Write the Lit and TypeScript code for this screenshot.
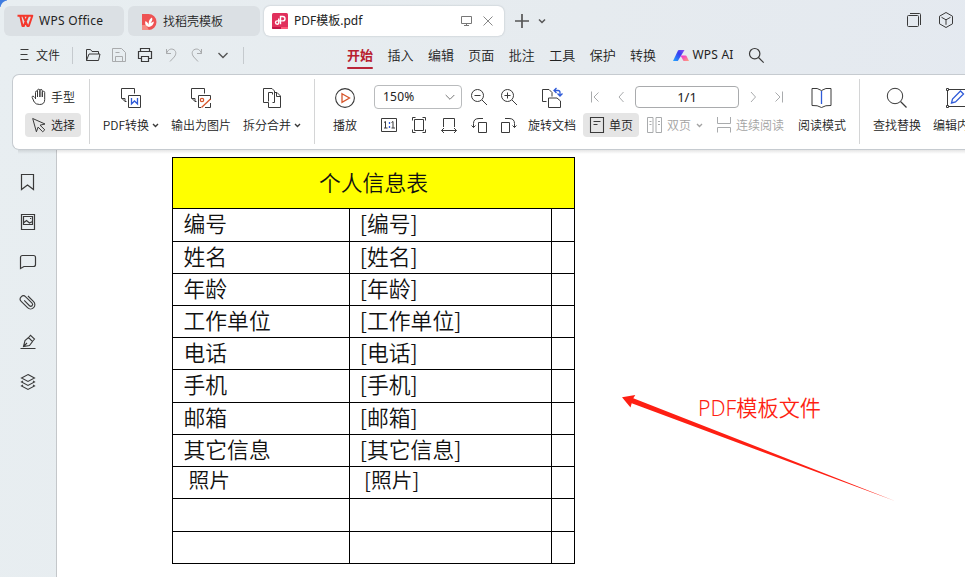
import { LitElement, html, css, svg, nothing } from "lit";
import type { SVGTemplateResult } from "lit";
import { customElement } from "lit/decorators.js";
import { classMap } from "lit/directives/class-map.js";

/* Icons share one drawing grid; each viewBox selects the part that belongs to the icon. */
const icon = (x: number, y: number, w: number, h: number, body: SVGTemplateResult, cls = "") =>
  html`<svg class="ic ${cls}" width=${w} height=${h} viewBox="${x} ${y} ${w} ${h}" aria-hidden="true">${body}</svg>`;

const smallChevron = html`<svg class="ic chev" width="7" height="5" viewBox="0 0 7 5"><path d="M1 1L3.5 3.5L6 1" stroke-width="1.4" /></svg>`;

const MENU = ["开始", "插入", "编辑", "页面", "批注", "工具", "保护", "转换"];
const FIELDS = ["编号", "姓名", "年龄", "工作单位", "电话", "手机", "邮箱", "其它信息", "照片"];

@customElement("app-root")
export class AppRoot extends LitElement {
  static styles = css`
    :host {
      display: block; position: relative; width: 965px; height: 577px; overflow: hidden;
      background: linear-gradient(100deg, #e8eef1 0%, #e6ebef 55%, #e4e9f0 100%);
      font: 12px/16px "Noto Sans", "Noto Sans CJK SC", sans-serif; color: #222;
    }
    * { box-sizing: border-box; }
    .ic { display: block; flex: none; fill: none; stroke: #3a3a3a; stroke-width: 1; overflow: visible; }
    .grey { stroke: #a9abad; }
    .label { white-space: nowrap; font-family: "Noto Sans CJK SC", sans-serif; font-weight: 350; }
    .latin { white-space: nowrap; }
    .t1 { letter-spacing: .3px; }
    .t2 { letter-spacing: .2px; }
    .corner { position: absolute; left: 0; top: 0; width: 7px; height: 7px;
      background: radial-gradient(circle at 8px 8px, transparent 7px, #3f7ce0 8px); }

    .tabs { display: flex; height: 41px; padding: 6px 0 5px 4px; gap: 4px; align-items: stretch; }
    .tab { display: flex; align-items: center; border-radius: 6px; background: #dbe0e4; }
    .home { width: 120px; padding-left: 13px; gap: 6px; }
    .store { width: 132px; padding-left: 13px; gap: 7px; }
    .doc { width: 240px; padding-left: 8px; gap: 6px; background: #fff; box-shadow: 0 0 2px #aeb5bc; }
    .tools { display: flex; margin-left: auto; gap: 11px; padding-right: 10px; }
    .add { display: flex; align-items: center; gap: 9px; margin-left: 7px; }
    .win { display: flex; align-items: center; gap: 17px; margin-left: auto; padding-right: 11px; }
    .win .ic { position: relative; top: -1px; }

    .menubar { display: flex; height: 33px; padding: 0 0 5px 20px; align-items: center; }
    .file { margin-left: 7px; width: 26px; }
    .vline { width: 1px; height: 17px; background: #c5cace; flex: none; }
    .vline.a { margin: 0 12px 0 10px; }
    .vline.b { margin-left: 14px; }
    .quick { display: flex; gap: 10px; align-items: center; }
    .menu { display: flex; margin-left: 103px; height: 28px; }
    .menu .entry { position: relative; width: 40.45px; font-size: 13px; line-height: 27px; }
    .menu .entry.on { color: #b8202f; font-weight: 700; }
    .menu .entry.on::after { content: ""; position: absolute; left: 0; top: 26px; width: 26px; height: 2px; background: #b92538; border-radius: 1px; }
    .ai { display: flex; gap: 4px; margin-left: 2px; width: 76px; align-items: center; }

    .ribbon { position: relative; z-index: 1; display: flex; height: 76px; margin-left: 12px; padding-left: 1px; border: 1px solid #c6cbd0; border-right: 0;
      border-radius: 7px 0 0 7px; background: #fff; overflow: hidden; }
    .shade { position: absolute; z-index: 1; left: 18px; right: 0; top: 150px; height: 4px; background: linear-gradient(rgba(0,0,0,.1), transparent); }
    .rule { width: 1px; height: 65px; margin-top: 4px; background: #d4d5d6; flex: none; }
    .group { display: flex; flex: none; }
    .g1 { width: 75px; flex-direction: column; padding: 10px 0 0 11px; gap: 4px; }
    .g2 { width: 224px; padding-left: 8px; }
    .g3 { width: 544px; padding-left: 6px; }
    .g4 { padding-left: 7px; }
    .pill { display: flex; align-items: center; width: 56px; height: 24px; gap: 5px; padding-left: 7px; border-radius: 4px; flex: none; }
    .pill.on { background: #e5e5e5; }
    .big { display: flex; flex-direction: column; align-items: center; flex: none; padding-top: 13px; gap: 9px; }
    .big .label { display: flex; align-items: center; gap: 3px; }
    .w48 { width: 48px; } .w56 { width: 56px; } .w60 { width: 60px; }
    .w66 { width: 66px; } .w68 { width: 68px; } .w74 { width: 74px; }
    .zoom { margin-left: 5px; width: 150px; padding-top: 10px; }
    .line { display: flex; align-items: center; height: 24px; }
    .select { display: flex; align-items: center; justify-content: space-between; width: 88px; height: 24px; padding: 0 6px 0 8px;
      border: 1px solid #b9bbbd; border-radius: 4px; margin-right: 9px; }
    .out { margin-right: 14px; }
    .fits { gap: 14px; padding-left: 7px; margin-top: 4px; }
    .nav { margin-left: 3px; width: 211px; padding-top: 10px; }
    .pager { padding-left: 8px; }
    .page { width: 104px; height: 22px; margin: 0 12px 0 11px; border: 1px solid #a9abad; border-radius: 4px; text-align: center;
      font: 13px/20px "Noto Sans", sans-serif; color: #222; }
    .next { margin-right: 18px; } .prev { margin-left: 19px; }
    .modes { margin-top: 4px; }
    .mode { display: flex; align-items: center; color: #a3a3a3; gap: 5px; }
    .mode .chev { stroke: #a3a3a3; }
    .two { margin-left: 8px; } .cont { margin-left: 14px; }

    .body { display: flex; height: 427px; }
    .side { width: 57px; border-right: 1px solid #c4c7ca; padding: 24px 0 0 20px; display: flex; flex-direction: column; gap: 24px; }
    .canvas { flex: 1; background: #fff; padding: 7px 0 0 115px; }
    .sheet { display: grid; width: 403px; padding: 1px; gap: 1px; background: #000; color: #111;
      grid-template-columns: 176px 201px 22px;
      grid-template-rows: 50px 32px 31px 31px 31px 31px 32px 31px 31px 31px 32px 31px;
      font: 21.8px/28px "Noto Sans CJK SC", sans-serif; font-weight: 350; }
    .cell { background: #fff; padding-left: 10.5px; white-space: nowrap; }
    .cell.value { padding-left: 9.8px; }
    .cell.title { grid-column: 1 / -1; background: #ff0; text-align: center; padding: 0; line-height: 48px; }
    .cell.photo { font-size: 20.8px; line-height: 25px; padding-left: 15.5px; }
    .cell.photo.value { padding-left: 14px; }
    .note { position: absolute; left: 698px; top: 394px; font: 21.2px/28px "Noto Sans", "Noto Sans CJK SC", sans-serif; color: #fe1f13; white-space: nowrap; font-weight: 350; }
    .arrow { position: absolute; left: 620px; top: 393px; }
  `;

  private tabs() {
    return html`<div class="tabs">
      <div class="tab home">
        ${icon(17, 13, 16, 14, svg`<path d="M17.500 14.800H32.300L28.800 25H27.500L23.200 15M20.300 15L22.500 25H23.800L28 15" stroke="#f4382c" stroke-width="2" stroke-linejoin="round"/>`)}
        <span class="latin t1">WPS Office</span>
      </div>
      <div class="tab store">
        ${icon(141, 12, 15, 17, svg`<g stroke="none"><path d="M142 13h6.500a7.800 7.800 0 0 1 0 16H142z" fill="#ee5253"/><path d="M142 24h4l3 5H142z" fill="#f58b84"/><path d="M149 26C144.500 25 145 21.500 145.500 20C147.500 21 149 23 149 26C148 22 149 18 152 16.500C153 19 151.500 21 150.500 22L154 20.500C153.500 23.500 152 25.500 149 26z" fill="#fff"/></g>`)}
        <span class="label">找稻壳模板</span>
      </div>
      <div class="tab doc">
        ${icon(272, 13, 16, 16, svg`<rect x="272" y="13" width="16" height="16" rx="1.500" fill="#e1305c" stroke="none"/><path d="M272 27h9v2h-8q-1 0-1-1z" fill="#c01648" stroke="none"/><path d="M281 27h7v1q0 1-1 1h-6z" fill="#ff5878" stroke="none"/><path d="M280.500 24.200V16.500h2.300a2.200 2.200 0 0 1 0 4.400H277.200a1.700 1.700 0 0 0 0 3.400q1.500 0 1.500-1.500V18.500" stroke="#fff" stroke-width="1.400"/>`)}
        <span class="latin">PDF模板.pdf</span>
        <div class="tools">
          ${icon(461, 16, 11, 10, svg`<path d="M461.500 16.500h10v7h-10zM464 25.500h5M466.500 23.500v2" stroke="#777"/>`)}
          ${icon(483, 16, 11, 10, svg`<path d="M483.500 16.500l9 9M492.500 16.500l-9 9" stroke="#888"/>`)}
        </div>
      </div>
      <div class="add">
        ${icon(515, 14, 14, 14, svg`<path d="M522 14v14M515 21h14" stroke="#555" stroke-width="1.700"/>`)}
        ${icon(538, 18, 8, 6, svg`<path d="M539 19.500l3 3l3-3" stroke="#555" stroke-width="1.500"/>`)}
      </div>
      <div class="win">
        ${icon(907, 13, 15, 14, svg`<rect x="907.500" y="15.500" width="11" height="11" rx="1"/><path d="M910 13.500h9.500q1 0 1 1V25"/>`)}
        ${icon(939, 12, 15, 16, svg`<path d="M946 12.500l6.500 3.700v7.600l-6.500 3.700l-6.500-3.700v-7.600zM941.500 17.300l4.500 2.500l4.500-2.500M946 19.800v5"/>`)}
      </div>
    </div>`;
  }

  private menubar() {
    return html`<div class="menubar">
      ${icon(20, 49, 9, 12, svg`<path d="M20.500 49.500h8M20.500 54.500h7M20.500 59.500h8"/>`)}
      <span class="label file">文件</span>
      <div class="vline a"></div>
      <div class="quick">
        ${icon(85, 48, 16, 14, svg`<path d="M86.500 60.500v-11h4l1.500 2h6.500v2.500M86.500 60.500l2.500-6.500h11l-1.500 6.500z" stroke-linejoin="round"/>`)}
        ${icon(111, 48, 16, 14, svg`<path d="M112.500 48.500h9l4 4v9h-13zM115.500 61.500v-5h7v5M115.500 52.500h4"/>`, "grey")}
        ${icon(137, 48, 16, 14, svg`<path d="M140.500 51.500v-3h9v3M141 58.500h-2.500v-7h13v7H149M141.500 56.500h7v5h-7z" stroke-width="1.200"/>`)}
        ${icon(163, 48, 16, 14, svg`<path d="M166.500 49v4.500h4.500M166.500 53.500c1.500-4 4-5 6.500-4.200c3.500 1.200 3.500 5 1.200 7.700l-4.200 4.500"/>`, "grey")}
        ${icon(189, 48, 16, 14, svg`<path d="M201.500 49v4.500H197M201.500 53.500c-1.500-4-4-5-6.500-4.200c-3.500 1.200-3.500 5-1.200 7.700l4.200 4.500"/>`, "grey")}
        ${icon(215, 52, 14, 6, svg`<path d="M218.500 53l4.500 4.500l4.500-4.500" stroke="#555" stroke-width="1.400"/>`)}
      </div>
      <div class="vline b"></div>
      <div class="menu">${MENU.map((m, i) => html`<span class=${classMap({ label: true, entry: true, on: i === 0 })}>${m}</span>`)}</div>
      <div class="ai">
        ${icon(673, 49, 16, 11, svg`<defs><linearGradient id="a" x1="0" y1="1" x2="1" y2="0"><stop offset="0" stop-color="#20a8ff"/><stop offset=".6" stop-color="#3a3cf0"/><stop offset="1" stop-color="#8b4cf5"/></linearGradient><linearGradient id="b" x1="0" y1="0" x2="1" y2="1"><stop offset="0" stop-color="#f028d8"/><stop offset="1" stop-color="#ffa27a"/></linearGradient></defs><path d="M673 60L678 49.500q.3-.5 1-.5h5.500L677.800 60z" fill="url(#a)" stroke="none"/><path d="M680.500 54.500h5q.7 0 1 .5l2.500 5h-5.500z" fill="url(#b)" stroke="none"/>`)}
        <span class="latin t2">WPS AI</span>
      </div>
      ${icon(749, 48, 15, 15, svg`<circle cx="754.700" cy="53.700" r="5.200" stroke-width="1.200"/><path d="M758.500 57.500l5.200 5.200" stroke-width="1.200"/>`)}
    </div>`;
  }

  private big(cls: string, ic: unknown, text: string, drop = false) {
    return html`<div class="big ${cls}">${ic}<span class="label">${text}${drop ? smallChevron : nothing}</span></div>`;
  }

  private ribbon() {
    return html`<div class="ribbon">
      <div class="group g1">
        <div class="pill">${icon(32, 89, 14, 16, svg`<path d="M35.500 99V92.500q0-1.500 1-1.500t1 1.500V97V90.500q0-1.300 1.200-1.300t1.200 1.300V97V90.700q0-1.200 1.200-1.200t1.200 1.200V97V92.500q0-1.200 1.200-1.200t1.200 1.200v7q0 5-5 5q-4 0-5.500-2.500l-2-4.500q-.4-1.500 1-1.500l1.300 1.500"/>`)}<span class="label">手型</span></div>
        <div class="pill on">${icon(32, 118, 14, 14, svg`<path d="M32.700 118.500l12.300 5.500l-5 1.200l4.800 4.600l-2.100 2l-4.600-4.700l-1.700 4.700z" stroke-linejoin="round"/>`)}<span class="label">选择</span></div>
      </div>
      <div class="rule"></div>
      <div class="group g2">
        ${this.big("w66", icon(121, 88, 20, 20, svg`<path d="M126.500 101.500h-1.500l-3.500-3.500v-9.500h13v5M121.500 98.500h3.500v3M128.500 95.500h12v12h-12z"/><path d="M131.500 98v6l3-3l3 3V98" stroke="#2f5bd8" stroke-width="1.300"/>`), "PDF转换", true)}
        ${this.big("w74", icon(191, 88, 20, 20, svg`<path d="M196.500 101.500h-1.500l-3.500-3.500v-9.500h13v5M191.500 98.500h3.500v3M210.500 100v-4.500h-12v12H201M205 107.500h5.500v-4.500"/><path d="M201.500 107.500l9-8.500" stroke="#d6552a" stroke-width="1.300"/><circle cx="202" cy="100" r="1.700" stroke="#d6552a" stroke-width="1.200"/>`), "输出为图片")}
        ${this.big("w68", icon(263, 88, 18, 20, svg`<path d="M268.500 102.500h-5v-14h8.500l2.500 2.500v2.500M268.500 102.500v5h12V96l-3.500-3.500h-2.500v10h-2M276.500 92.500v4h4M268.500 101.500v-9h4v2"/>`), "拆分合并", true)}
      </div>
      <div class="rule"></div>
      <div class="group g3">
        ${this.big("w48", icon(335, 88, 20, 20, svg`<circle cx="345" cy="98" r="9.400" stroke-width="1.100"/><path d="M342 93.700l7.500 4.300l-7.500 4.300z" stroke="#d6552a" stroke-width="1.300"/>`), "播放")}
        <div class="zoom">
          <div class="line">
            <div class="select"><span class="latin t2">150%</span>${icon(445, 94, 10, 6, svg`<path d="M445.700 95l4.300 4.300l4.300-4.300" stroke="#777"/>`)}</div>
            ${icon(471, 89, 16, 16, svg`<circle cx="477.500" cy="95.500" r="6" /><path d="M474.500 95.500h6M482 100l5 5"/>`, "out")}
            ${icon(501, 89, 16, 16, svg`<circle cx="507.500" cy="95.500" r="6" /><path d="M504.500 95.500h6M507.500 92.500v6M512 100l5 5"/>`)}
          </div>
          <div class="line fits">
            ${icon(381, 117, 16, 16, svg`<path d="M381.500 118.500h15v13h-15z"/><path d="M384 122.500l1.500-1v6.500M384 128h3.500M391.500 122.500l1.500-1v6.500M391.500 128h3.500"/><path d="M389.500 122v2M389.500 126v2" stroke="#2f5bd8" stroke-width="1.300"/>`)}
            ${icon(411, 117, 16, 16, svg`<path d="M414.500 119.500h9v11h-9zM412.500 120.500v-3h3M422.500 117.500h3v3M425.500 129.500v3h-3M415.500 132.500h-3v-3"/>`)}
            ${icon(441, 117, 16, 16, svg`<path d="M443.500 127v-8.500h11v8.500M441.500 130.500h15M444 128l-2.500 2.500l2.500 2.500M454 128l2.500 2.500l-2.500 2.500"/>`)}
            ${icon(471, 117, 16, 16, svg`<path d="M478.500 122.500h8v10h-8zM483 118.500h-4q-5.500 0-5.500 5v4M471.500 125.500l2 2l2-2"/>`)}
            ${icon(501, 117, 16, 16, svg`<path d="M501.500 122.500h8v10h-8zM505 118.500h4q5.500 0 5.500 5v4M512.500 125.500l2 2l2-2"/>`)}
          </div>
        </div>
        ${this.big("w56", icon(542, 88, 20, 20, svg`<path d="M546.500 101.500h-4v-12h6.500l3 3v4M548.500 107.500v-9.500h8.500l3.500 3v6.500z"/><path d="M556.500 88l-2.500 2.500l2.500 2.500M554.500 90.500h3.500q2 0 2 2v3M557.500 93.500l2.500 2.500l2.500-2.500" stroke="#2f5bd8" stroke-width="1.300"/>`), "旋转文档")}
        <div class="nav">
          <div class="line pager">
            ${icon(591, 91, 8, 12, svg`<path d="M591.500 91.500v11M598.500 92.500l-4.500 4.500l4.500 4.500"/>`, "grey")}
            ${icon(618, 91, 6, 12, svg`<path d="M623.500 92l-4.500 5l4.500 5"/>`, "grey prev")}
            <div class="page">1/1</div>
            ${icon(751, 91, 6, 12, svg`<path d="M751 92l4.500 5l-4.500 5"/>`, "grey next")}
            ${icon(775, 91, 8, 12, svg`<path d="M782.500 91.500v11M775.500 92.500l4.500 4.500l-4.500 4.500"/>`, "grey")}
          </div>
          <div class="line modes">
            <div class="pill on">${icon(590, 117, 14, 16, svg`<path d="M590.500 117.500h13v15h-13zM593.500 121.500h7M593.500 124.500h4" stroke-width="1.100"/>`)}<span class="label">单页</span></div>
            <div class="mode two">${icon(647, 117, 15, 16, svg`<path d="M647.500 117.500h5.500v15h-5.500zM656 117.500h5.500v15H656zM649.500 121.500h2M649.500 124.500h2M658 121.500h2M658 124.500h2"/>`, "grey")}<span class="label">双页</span>${smallChevron}</div>
            <div class="mode cont">${icon(718, 117, 14, 16, svg`<path d="M718.500 117v6.500h13V117M718.500 132.500v-5h13v5"/>`, "grey")}<span class="label">连续阅读</span></div>
          </div>
        </div>
        ${this.big("w56", icon(812, 88, 20, 20, svg`<path d="M821.500 90.500q-4-3-9.500-2v17q5.500-.5 9.500 2q4-2.500 9.500-2v-17q-5.500-1-9.500 2z"/><path d="M821.500 91v13" stroke="#2f5bd8" stroke-width="1.300"/>`), "阅读模式")}
      </div>
      <div class="rule"></div>
      <div class="group g4">
        ${this.big("w60", icon(887, 88, 20, 20, svg`<circle cx="895" cy="96" r="7.700"/><path d="M900.500 101.500l6 6" stroke-width="1.200"/>`), "查找替换")}
        ${this.big("w60", icon(946, 88, 22, 20, svg`<path d="M949 89.500h16M947.500 91v14M949 106.500h16"/><path d="M946.500 88.500h2v2h-2zM946.500 105.500h2v2h-2z"/><path d="M951.500 103l1-4l8-8l3 3l-8 8z" stroke="#2f5bd8" stroke-width="1.300"/>`), "编辑内容")}
      </div>
    </div>`;
  }

  private side() {
    return html`<div class="side">
      ${icon(20, 174, 16, 16, svg`<path d="M21.500 174.500h12v15l-6-4.500l-6 4.500z" stroke-width="1.200"/>`)}
      ${icon(20, 214, 16, 16, svg`<path d="M21.500 214.500h13v15h-13zM23.500 216.500h9v8h-9zM24 222.500l2.500-2l3 2.500l3-1.500" stroke-width="1.200"/><path d="M30 218.500h1.200"/>`)}
      ${icon(20, 254, 16, 16, svg`<path d="M20.500 268.500v-11q0-2 2-2h11q2 0 2 2v7q0 2-2 2h-9.500z" stroke-width="1.200"/>`)}
      ${icon(20, 294, 16, 16, svg`<g transform="translate(27.600 302) rotate(-45)"><path d="M-1.300 -3.500V4a1.800 1.800 0 0 0 3.600 0V-5a3.200 3.200 0 0 0-6.400 0V4a4.300 4.300 0 0 0 8.600 0V-4" stroke-width="1.100"/></g>`)}
      ${icon(20, 334, 16, 16, svg`<path d="M20.500 348.500h15M23.500 346.500l1.500-6l3.500-3l4 4l-3 4zM23.500 346.500l3.500-3.500M29 337l1.500-1.700l4 3.700l-1.700 2" stroke-width="1.100"/>`)}
      ${icon(20, 374, 16, 16, svg`<path d="M28 374.500l6.500 3.500l-6.500 3.500l-6.500-3.500zM23 381l-1.500 1l6.500 3.500l6.500-3.500l-1.500-1M23 385l-1.500 1l6.500 3.500l6.500-3.500l-1.500-1" stroke-width="1.100"/>`)}
    </div>`;
  }

  private sheet() {
    const row = (name: string) => {
      const photo = name === "照片";
      return html`<div class=${classMap({ cell: true, photo })}>${name}</div>
        <div class=${classMap({ cell: true, value: true, photo })}>${name ? `[${name}]` : ""}</div>
        <div class="cell"></div>`;
    };
    return html`<div class="sheet"><div class="cell title">个人信息表</div>${[...FIELDS, "", ""].map(row)}</div>`;
  }

  render() {
    return html`
      <div class="corner"></div>
      ${this.tabs()}${this.menubar()}${this.ribbon()}
      <div class="shade"></div>
      <div class="body">${this.side()}<div class="canvas">${this.sheet()}</div></div>
      <div class="note">PDF模板文件</div>
      <svg class="arrow" width="280" height="112" viewBox="620 393 280 112"><path d="M622 397.300L635.300 395L633.300 398.300L895 501L631.700 403.300L630.500 407.500z" fill="#fe1f13"/></svg>
    `;
  }
}
